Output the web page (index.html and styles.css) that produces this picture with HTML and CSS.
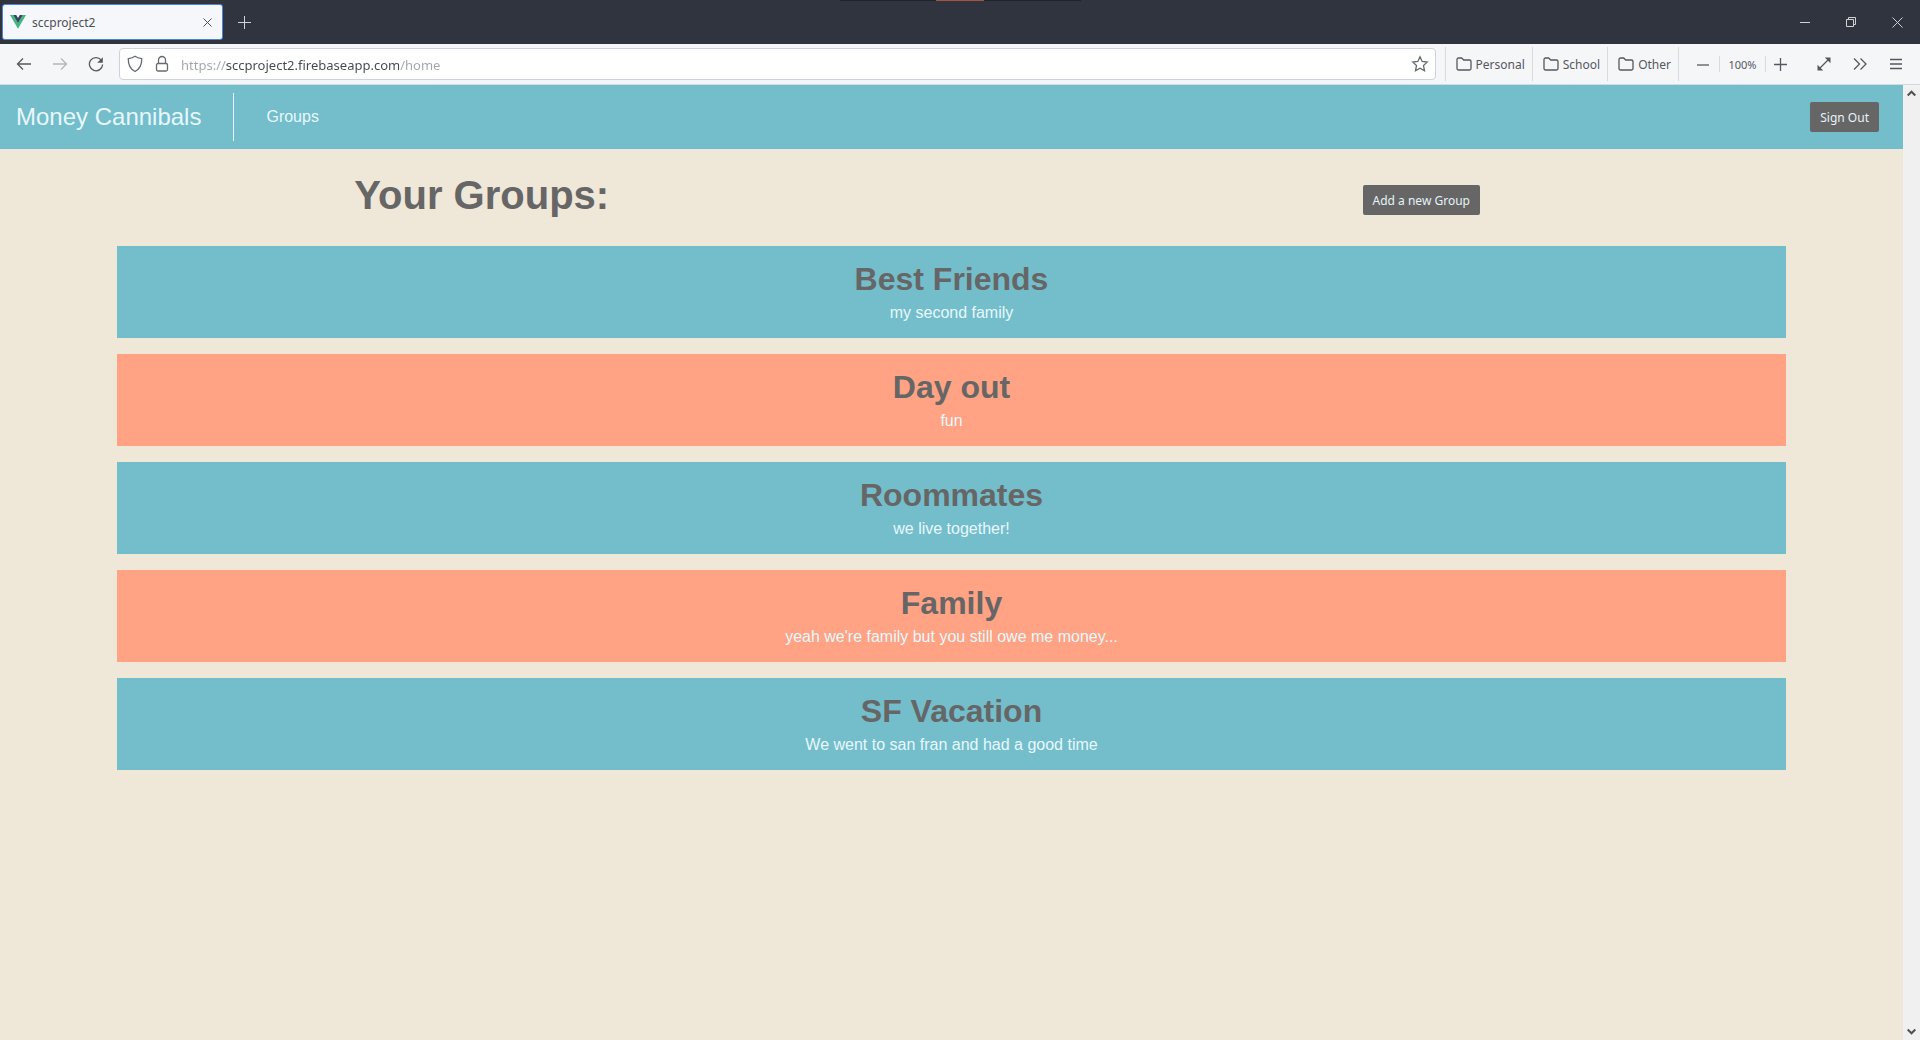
FILE: index.html
```html
<!DOCTYPE html>
<html lang="en">
<head>
<meta charset="utf-8">
<title>sccproject2</title>
<link rel="stylesheet" href="styles.css">
</head>
<body>
<div class="browser">
  <div class="tabbar">
    <div class="edge-strip"></div>
    <div class="tab">
      <svg class="tab-logo" width="16" height="14" viewBox="0 0 16 14"><path fill="#41b883" d="M0 0h3.200L8 8.300 12.800 0H16L8 13.800z"/><path fill="#34495e" d="M3.200 0h3L8 3.100 9.800 0h3L8 8.300z"/></svg>
      <span class="tab-title">sccproject2</span>
      <button class="tab-close" aria-label="Close tab"><svg width="9" height="9" viewBox="0 0 9 9"><path d="M.5.5l8 8M8.500.5l-8 8"/></svg></button>
    </div>
    <button class="new-tab" aria-label="New tab"><svg width="13" height="13" viewBox="0 0 13 13"><path d="M6.500 0v13M0 6.500h13"/></svg></button>
    <div class="window-buttons">
      <button aria-label="Minimize"><svg width="11" height="11" viewBox="0 0 11 11"><path d="M0 5.500h10"/></svg></button>
      <button aria-label="Restore"><svg width="11" height="11" viewBox="0 0 11 11"><path d="M.5 2.500h7v7h-7zM2.500 2.500v-2h7v7h-2"/></svg></button>
      <button aria-label="Close"><svg width="11" height="11" viewBox="0 0 11 11"><path d="M.5.5l10 10M10.500.5l-10 10"/></svg></button>
    </div>
  </div>

  <div class="toolbar">
    <div class="history">
      <button aria-label="Back"><svg width="16" height="16" viewBox="0 0 16 16"><path d="M15 8H2M7 2.500L1.500 8 7 13.500"/></svg></button>
      <button class="dim" aria-label="Forward"><svg width="16" height="16" viewBox="0 0 16 16"><path d="M1 8h13M9 2.500L14.500 8 9 13.500"/></svg></button>
      <button aria-label="Reload"><svg width="16" height="16" viewBox="0 0 16 16"><path d="M13.300 4.200A6.600 6.600 0 1 0 14.600 8.500"/><path class="solid" d="M14.800 1.200v5.600H9.200z"/></svg></button>
    </div>
    <div class="address">
      <svg width="16" height="18" viewBox="0 0 16 18"><path d="M8 1.200C6 2.700 3.600 3.300 1.300 3.600c-.2 6 1.500 10.400 6.700 12.900 5.200-2.500 6.900-6.900 6.700-12.900C12.400 3.300 10 2.700 8 1.200z"/></svg>
      <svg width="14" height="18" viewBox="0 0 14 18"><path d="M3.500 8.500V5a3.500 3.500 0 0 1 7 0v3.500"/><rect x="1.500" y="8.500" width="11" height="7.500" rx="1.500"/></svg>
      <input class="url" type="text" aria-label="Address" value="https://sccproject2.firebaseapp.com/home">
      <button class="star" aria-label="Bookmark this page"><svg width="18" height="18" viewBox="0 0 18 18"><path d="M9 1.800l2.200 4.700 5 .6-3.700 3.500 1 5.200L9 13.200l-4.500 2.600 1-5.200L1.800 7.100l5-.6z"/></svg></button>
    </div>
    <nav class="bookmarks" aria-label="Bookmarks">
      <button><svg width="16" height="14" viewBox="0 0 16 14"><path d="M1 11.500v-9A1.500 1.500 0 0 1 2.500 1h3.200l2 2h5.800A1.500 1.500 0 0 1 15 4.500v7a1.500 1.500 0 0 1-1.500 1.500h-11A1.500 1.500 0 0 1 1 11.500z"/></svg>Personal</button>
      <button><svg width="16" height="14" viewBox="0 0 16 14"><path d="M1 11.500v-9A1.500 1.500 0 0 1 2.500 1h3.200l2 2h5.800A1.500 1.500 0 0 1 15 4.500v7a1.500 1.500 0 0 1-1.500 1.500h-11A1.500 1.500 0 0 1 1 11.500z"/></svg>School</button>
      <button><svg width="16" height="14" viewBox="0 0 16 14"><path d="M1 11.500v-9A1.500 1.500 0 0 1 2.500 1h3.200l2 2h5.800A1.500 1.500 0 0 1 15 4.500v7a1.500 1.500 0 0 1-1.500 1.500h-11A1.500 1.500 0 0 1 1 11.500z"/></svg>Other</button>
    </nav>
    <div class="zoom">
      <button class="zoom-out" aria-label="Zoom out"><svg width="13" height="13" viewBox="0 0 13 13"><path d="M0 7h12"/></svg></button>
      <button class="zoom-level">100%</button>
      <button class="zoom-in" aria-label="Zoom in"><svg width="13" height="13" viewBox="0 0 13 13"><path d="M6.500 0v13M0 6.500h13"/></svg></button>
    </div>
    <div class="tools">
      <button aria-label="Full screen"><svg width="14" height="14" viewBox="0 0 14 14"><path d="M2.500 11.500l9-9"/><path class="solid" d="M7.800.5h5.700v5.700zM.5 7.800v5.700h5.700z"/></svg></button>
      <button aria-label="More tools"><svg width="14" height="14" viewBox="0 0 14 14"><path d="M1 1.500L6.500 7 1 12.500M7.500 1.500L13 7l-5.500 5.500"/></svg></button>
      <button aria-label="Menu"><svg width="12" height="12" viewBox="0 0 12 12"><path d="M0 1.500h12M0 6h12M0 10.500h12"/></svg></button>
    </div>
  </div>

  <div class="viewport">
    <div class="page">
      <header class="navbar">
        <a class="brand" href="#home">Money Cannibals</a>
        <a class="nav-link" href="#groups">Groups</a>
        <button class="btn">Sign Out</button>
      </header>
      <main>
        <div class="page-head">
          <h1>Your Groups:</h1>
          <button class="btn">Add a new Group</button>
        </div>
        <div class="groups">
          <section class="group"><h2>Best Friends</h2><p>my second family</p></section>
          <section class="group"><h2>Day out</h2><p>fun</p></section>
          <section class="group"><h2>Roommates</h2><p>we live together!</p></section>
          <section class="group"><h2>Family</h2><p>yeah we're family but you still owe me money...</p></section>
          <section class="group"><h2>SF Vacation</h2><p>We went to san fran and had a good time</p></section>
        </div>
      </main>
    </div>
    <div class="scrollbar">
      <svg width="9" height="7" viewBox="0 0 9 7"><path d="M.7 5.500l3.800-3.800 3.800 3.800"/></svg>
      <svg width="9" height="7" viewBox="0 0 9 7"><path d="M.7 1.500l3.800 3.800 3.800-3.800"/></svg>
    </div>
  </div>
</div>
</body>
</html>
```
FILE: styles.css
```css
* {
  box-sizing: border-box;
}

body {
  margin: 0;
  font-family: "Liberation Sans", Arial, sans-serif;
  font-size: 16px;
}

button {
  display: flex;
  align-items: center;
  justify-content: center;
  padding: 0;
  border: 0;
  background: none;
  color: inherit;
  font: inherit;
}

svg {
  flex: none;
  fill: none;
  stroke: currentColor;
}

svg .solid {
  fill: currentColor;
  stroke: none;
}

.browser {
  display: flex;
  flex-direction: column;
  min-height: 100vh;
}

.tabbar,
.toolbar {
  display: flex;
  font-family: "Noto Sans", sans-serif;
  font-size: 12px;
}

/* Tab strip */
.tabbar {
  position: relative;
  height: 44px;
  padding-left: 2px;
  background: #30343f;
  color: #d0d2d6;
}

.edge-strip {
  position: absolute;
  top: 0;
  left: 50%;
  width: 241px;
  height: 1px;
  margin-left: -120px;
  background: linear-gradient(to right, #20242a 96px, #a9543f 96px, #a9543f 144px, #20242a 144px);
}

.tab {
  display: flex;
  align-items: center;
  gap: 6px;
  width: 221px;
  height: 36px;
  margin-top: 4px;
  padding: 0 10px 0 7px;
  border: 1px solid #4a86d0;
  border-radius: 3px;
  background: #f5f7fa;
  color: #4c4f56;
}

.tab-logo {
  stroke: none;
}

.tab-title {
  flex: 1;
}

.new-tab {
  width: 43px;
}

.window-buttons {
  display: flex;
  margin-left: auto;
}

.window-buttons button {
  width: 46px;
}

/* Toolbar */
.toolbar {
  align-items: center;
  height: 41px;
  padding: 0 6px;
  border-bottom: 1px solid #d5dae0;
  background: #f5f6f8;
  color: #55585f;
}

.toolbar svg {
  stroke-width: 1.300;
}

.toolbar .solid {
  stroke: none;
}

.history {
  display: flex;
  width: 113px;
}

.history button {
  width: 36px;
}

.history .dim {
  color: #b4b6ba;
}

.address {
  display: flex;
  flex: 1;
  align-items: center;
  gap: 12px;
  height: 32px;
  padding: 0 6px 0 7px;
  border: 1px solid #cdd2dc;
  border-radius: 4px;
  background: #fff;
  color: #66696f;
}

/* The host name is darker than the scheme and the path. */
.url {
  flex: 1;
  min-width: 0;
  padding: 1px 0 0;
  border: 0;
  outline: 0;
  background: linear-gradient(to right, #a2a4a8 45px, #44474d 45px, #44474d 218px, #a2a4a8 218px);
  -webkit-background-clip: text;
  background-clip: text;
  color: transparent;
  font-family: "Noto Sans", sans-serif;
  font-size: 13px;
}

.bookmarks {
  display: flex;
  height: 34px;
  margin-left: 9px;
  border-right: 1px solid #d8dade;
}

.bookmarks button {
  gap: 4px;
  padding: 0 7px 0 10px;
  border-left: 1px solid #d8dade;
}

.zoom {
  display: flex;
  height: 16px;
  margin-left: 8px;
}

.zoom-out {
  width: 32px;
}

.zoom-level {
  width: 47px;
  border: solid #d8dade;
  border-width: 0 1px;
  font-size: 11px;
}

.zoom-in {
  width: 28px;
}

.tools {
  display: flex;
  margin-left: 12px;
}

.tools button {
  width: 36px;
}

/* Web page */
.viewport {
  display: flex;
  flex: 1;
}

.page {
  flex: 1;
  background: #efe7d8;
}

.scrollbar {
  display: flex;
  flex-direction: column;
  align-items: center;
  justify-content: space-between;
  width: 17px;
  padding: 5px 0;
  background: #f0f0f0;
  color: #505050;
}

.scrollbar svg {
  stroke-width: 2;
}

.navbar {
  display: flex;
  align-items: center;
  height: 64px;
  padding: 0 24px 0 16px;
  background: #74bdcb;
}

.navbar a {
  color: #e7f8fd;
  text-decoration: none;
}

.navbar .btn {
  margin-left: auto;
}

.brand {
  padding-right: 32px;
  border-right: 1px solid #e7f8fd;
  font-size: 24px;
  line-height: 48px;
}

.nav-link {
  margin-left: 32px;
}

.btn {
  height: 30px;
  padding: 0 10px;
  border-radius: 2px;
  background: #666;
  color: #e7f3f7;
  font-family: "Noto Sans", sans-serif;
  font-size: 12px;
}

.page-head {
  display: grid;
  grid-template-columns: 1fr 1fr;
  align-items: end;
  justify-items: center;
  padding: 26px 12px 31px;
}

h1,
h2,
p {
  margin: 0;
}

h1,
h2 {
  color: #666;
}

h1 {
  font-size: 40px;
  line-height: 40px;
}

.groups {
  display: flex;
  flex-direction: column;
  gap: 16px;
  padding: 0 117px;
}

.group {
  padding: 16px 16px 14px;
  background: #74bdcb;
  color: #e7f8fd;
  text-align: center;
}

.group:nth-child(even) {
  background: #ffa384;
}

.group h2 {
  font-size: 32px;
  line-height: 34px;
}

.group p {
  margin-top: 6px;
  line-height: 22px;
}
```
